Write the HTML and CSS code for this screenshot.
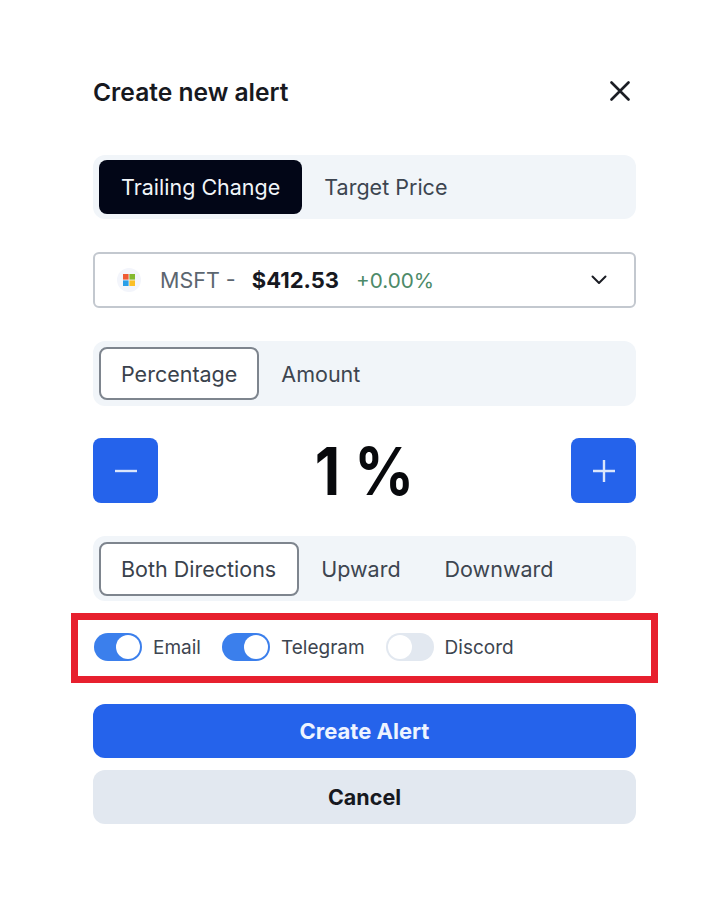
FILE: index.html
```html
<!DOCTYPE html>
<html lang="en">
<head>
<meta charset="utf-8">
<title>Create new alert</title>
<link rel="stylesheet" href="styles.css">
</head>
<body>
<main class="dialog">
  <header class="head">
    <h1 class="title">Create new alert</h1>
    <svg class="close" viewBox="0 0 20 20" aria-label="Close"><path d="M1.5 1.5 18.5 18.5M18.5 1.5 1.5 18.5"/></svg>
  </header>

  <div class="tabs tabs-main">
    <span class="tab tab-dark">Trailing Change</span>
    <span class="tab">Target Price</span>
  </div>

  <div class="select">
    <span class="logo">
      <svg viewBox="0 0 12 12"><rect width="5.6" height="5.6" fill="#ef5b34"/><rect x="6.4" width="5.6" height="5.6" fill="#84b92f"/><rect y="6.4" width="5.6" height="5.6" fill="#2a9fe8"/><rect x="6.4" y="6.4" width="5.6" height="5.6" fill="#fbbf25"/></svg>
    </span>
    <span class="sym">MSFT -</span>
    <strong class="price">$412.53</strong>
    <span class="chg">+0.00%</span>
    <svg class="chev" viewBox="0 0 16 10"><path d="M1.5 1.5 8 8l6.5-6.5"/></svg>
  </div>

  <div class="tabs tabs-unit">
    <span class="tab tab-outline">Percentage</span>
    <span class="tab">Amount</span>
  </div>

  <div class="stepper">
    <span class="step"><svg viewBox="0 0 22 22"><path d="M0 11H22"/></svg></span>
    <span class="value">1 %</span>
    <span class="step"><svg viewBox="0 0 22 22"><path d="M0 11H22M11 0V22"/></svg></span>
  </div>

  <div class="tabs tabs-dir">
    <span class="tab tab-outline">Both Directions</span>
    <span class="tab">Upward</span>
    <span class="tab">Downward</span>
  </div>

  <div class="channels">
    <span class="switch on"></span><span class="lbl">Email</span>
    <span class="switch on"></span><span class="lbl">Telegram</span>
    <span class="switch"></span><span class="lbl">Discord</span>
  </div>

  <div class="btn btn-primary">Create Alert</div>
  <div class="btn btn-muted">Cancel</div>
</main>
</body>
</html>
```
FILE: styles.css
```css
* { box-sizing: border-box; }
html, body { margin: 0; background: #fff; }
body { font-family: Inter, "Liberation Sans", sans-serif; color: #0f172a; }
.dialog { width: 543px; margin-left: 93px; padding-top: 71px; display: flex; flex-direction: column; }
.head { height: 42px; display: flex; align-items: center; justify-content: space-between; }
.title { margin: 0; font-size: 24.6px; font-weight: 600; color: #17191f; }
.close { width: 20px; height: 20px; margin-right: 6px; margin-bottom: 2px; fill: none; stroke: #1b1d24; stroke-width: 2.6; stroke-linecap: round; }
.tabs { height: 65px; background: #f1f5f9; border-radius: 12px; padding: 6px 6px 5px; display: flex; align-items: stretch; color: #3d4550; font-size: 21.5px; }
.tabs-main { height: 64px; padding: 5px 6px; margin-top: 42px; }
.tabs-unit { margin-top: 33px; padding-bottom: 6px; }
.tabs-dir { margin-top: 33px; }
.tab { display: flex; align-items: center; padding: 0 22px; border-radius: 8px; white-space: nowrap; }
.tab-dark { background: #020617; color: #f1f5f9; }
.tab-outline { background: #fff; border: 2px solid #7e858e; padding: 0 20px; color: #3a424c; }
.tabs-dir .tab-outline { padding-right: 21px; }
.select { margin-top: 33px; height: 56px; border: 2px solid #c3c8cf; border-radius: 6px; display: flex; align-items: center; padding-left: 22px; padding-right: 27px; font-size: 21.5px; }
.logo { width: 24px; height: 24px; border-radius: 50%; background: #f3f5fb; display: flex; align-items: center; justify-content: center; }
.logo svg { width: 12px; height: 12px; display: block; }
.sym { margin-left: 19px; color: #5c6670; }
.price { margin-left: 16px; font-size: 22px; font-weight: 700; color: #17191f; }
.chg { margin-left: 17px; font-size: 20.7px; color: #4c8a68; }
.chev { margin-left: auto; width: 16px; height: 10px; fill: none; stroke: #1b1d24; stroke-width: 2; stroke-linecap: round; stroke-linejoin: round; }
.stepper { margin-top: 32px; height: 65px; display: flex; align-items: center; justify-content: space-between; }
.step { width: 65px; height: 65px; border-radius: 8px; background: #2563eb; display: flex; align-items: center; justify-content: center; }
.step svg { width: 22px; height: 22px; fill: none; stroke: #dbe6fb; stroke-width: 2.4; }
.value { font-size: 59px; font-weight: 700; color: #08090c; line-height: 65px; transform: scaleY(1.13); }
.channels { margin: 12px -22px 0; height: 70px; border: 7px solid #e7202e; padding: 0 0 2px 16px; display: flex; align-items: center; font-size: 19px; color: #3d4550; }
.switch { width: 48px; height: 28px; border-radius: 14px; background: #e2e8f0; position: relative; flex: none; }
.switch::after { content: ""; position: absolute; left: 2px; top: 2px; width: 24px; height: 24px; border-radius: 50%; background: #fff; }
.switch.on { background: #3b7fec; }
.switch.on::after { left: 22px; }
.lbl { margin-left: 11px; margin-right: 21px; }
.btn { height: 54px; border-radius: 12px; display: flex; align-items: center; justify-content: center; font-size: 22px; font-weight: 700; }
.btn-primary { margin-top: 21px; background: #2563eb; color: #eef4ff; }
.btn-muted { margin-top: 12px; background: #e2e8f0; color: #17191f; font-size: 21.5px; }
```
